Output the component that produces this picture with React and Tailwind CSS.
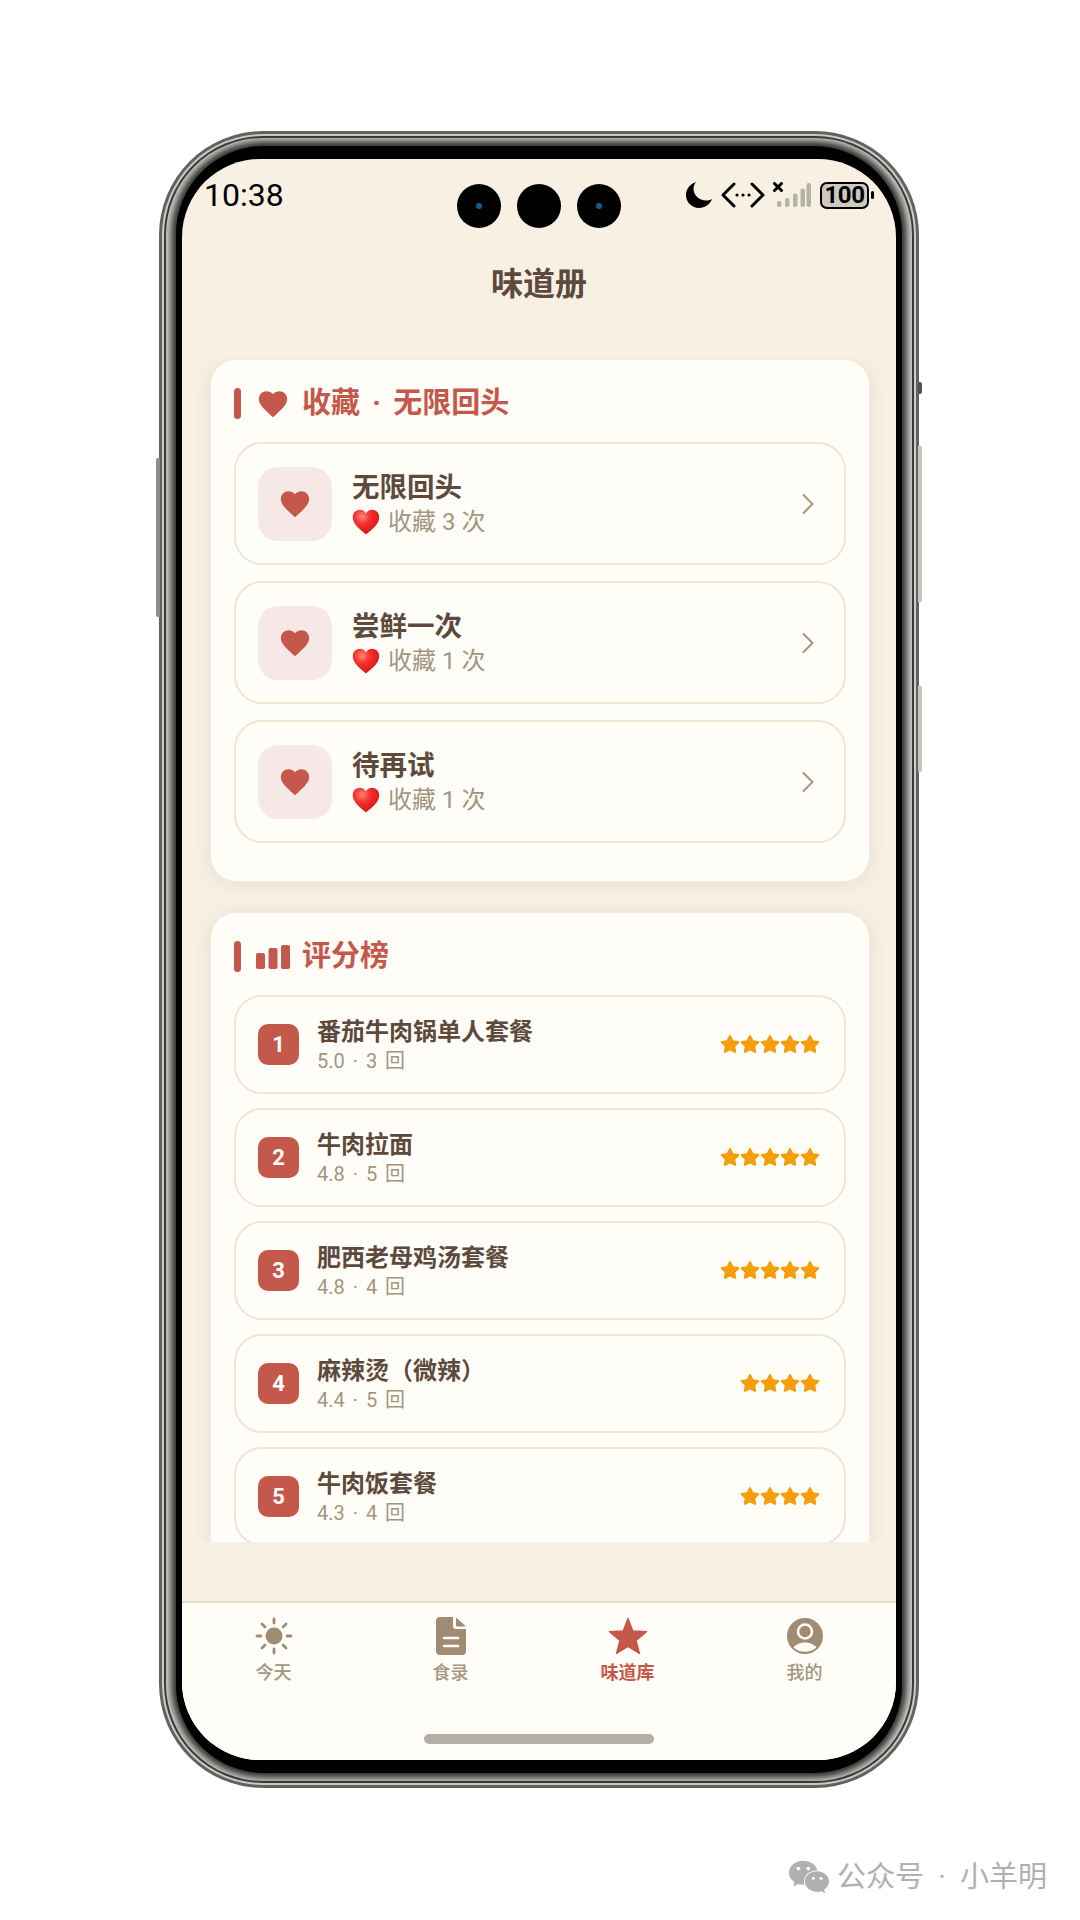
import React from "react";
import { FaStar, FaWeixin } from "react-icons/fa";

const font = { fontFamily: 'Roboto, "Noto Sans CJK SC", sans-serif' };

function Heart({ size = 34 }) {
  return (
    <svg width={size} height={size} viewBox="0 0 24 24" fill="#c4584a">
      <path d="M12 21.350l-1.450-1.320C5.400 15.360 2 12.280 2 8.500 2 5.420 4.420 3 7.500 3c1.740 0 3.410.81 4.500 2.090C13.090 3.810 14.760 3 16.500 3 19.580 3 22 5.420 22 8.500c0 3.780-3.400 6.860-8.550 11.540L12 21.350z" />
    </svg>
  );
}

function EmojiHeart({ id }) {
  return (
    <svg width="28" height="26" viewBox="0 0 28 26" className="shrink-0">
      <defs>
        <radialGradient id={id} cx="0.35" cy="0.28" r="0.85">
          <stop offset="0" stopColor="#ff8a7a" />
          <stop offset="0.35" stopColor="#f8312f" />
          <stop offset="1" stopColor="#c90f0f" />
        </radialGradient>
      </defs>
      <path d="M14 25.500C9 21 .8 15.600.8 8.200.8 3.700 4.200.8 7.900.8c2.600 0 4.800 1.300 6.100 3.600C15.300 2.100 17.500.8 20.100.8c3.700 0 7.100 2.900 7.100 7.400 0 7.400-8.200 12.800-13.200 17.300z" fill={`url(#${id})`} />
    </svg>
  );
}

function Chevron() {
  return (
    <svg width="14" height="22" viewBox="0 0 14 22" fill="none" stroke="#a39580" strokeWidth="2" strokeLinecap="round" strokeLinejoin="round">
      <path d="M2.500 2l9 9-9 9" />
    </svg>
  );
}

function SectionTitle({ icon, text }) {
  return (
    <div className="flex items-center h-[31px]">
      <div className="w-[7px] h-[31px] rounded-full bg-[#c4584a]" />
      <div className="w-[61px] flex justify-center pl-[2px]">{icon}</div>
      <span className="text-[29px] leading-none font-bold text-[#c4584a] [word-spacing:5px]">{text}</span>
    </div>
  );
}

function CollectRow({ name, count, id }) {
  return (
    <div className="h-[123px] flex items-center rounded-[28px] border-2 border-[#efe6d3] pl-[22px] pr-[29px]">
      <div className="w-[74px] h-[74px] rounded-[20px] bg-[#f6e8e6] flex items-center justify-center">
        <Heart />
      </div>
      <div className="flex-1 ml-[20px] flex flex-col">
        <span className="text-[27.500px] leading-[36px] font-bold text-[#5d4a3d]">{name}</span>
        <span className="flex items-center gap-[8px] text-[24px] leading-[32px] text-[#a39580]">
          <EmojiHeart id={id} />
          {`收藏 ${count} 次`}
        </span>
      </div>
      <Chevron />
    </div>
  );
}

function RankRow({ rank, name, score, times, stars }) {
  return (
    <div className="h-[99px] flex items-center rounded-[28px] border-2 border-[#efe6d3] pl-[22px] pr-[24px] shrink-0">
      <div className="w-[41px] h-[41px] rounded-[10px] bg-[#c4584a] flex items-center justify-center text-white text-[22px] font-bold">
        {rank}
      </div>
      <div className="flex-1 ml-[18px] flex flex-col">
        <span className="text-[24px] leading-[32px] font-bold text-[#5d4a3d]">{name}</span>
        <span className="text-[20px] leading-[26px] text-[#a39580] [word-spacing:3px]">{`${score} · ${times} 回`}</span>
      </div>
      <div className="flex mb-[2px]">
        {Array.from({ length: stars }).map((_, i) => (
          <FaStar key={i} className="w-[20px] h-[20px] text-[#f59e0b]" />
        ))}
      </div>
    </div>
  );
}

function SunIcon() {
  return (
    <svg width="38" height="38" viewBox="0 0 38 38" fill="#a08c72" stroke="#a08c72" strokeWidth="2.800" strokeLinecap="round">
      <circle cx="19" cy="19" r="8.500" stroke="none" />
      <path d="M19 2v4M19 32v4M2 19h4M32 19h4M7 7l3 3M28 28l3 3M7 31l3-3M28 10l3-3" fill="none" />
    </svg>
  );
}

function DocIcon() {
  return (
    <svg width="30" height="38" viewBox="0 0 30 38" fill="#a08c72">
      <path d="M4 0h13v9a3 3 0 0 0 3 3h10v22a4 4 0 0 1-4 4H4a4 4 0 0 1-4-4V4a4 4 0 0 1 4-4z" />
      <path d="M20 .5L30 9.500H21a1 1 0 0 1-1-1z" />
      <path d="M8 21h14M8 29h14" stroke="#fffdf7" strokeWidth="2.600" strokeLinecap="round" />
    </svg>
  );
}

function StarIcon() {
  return (
    <svg width="40" height="38" viewBox="0 0 40 38" fill="#c4584a" stroke="#c4584a" strokeWidth="1.400" strokeLinejoin="round">
      <path d="M20 1.500L24.800 14 38.500 14.800 28 23.500 31.500 36.500 20 29.300 8.500 36.500 12 23.500 1.500 14.800 15.200 14z" />
    </svg>
  );
}

function UserIcon() {
  return (
    <svg width="36" height="36" viewBox="0 0 36 36">
      <circle cx="18" cy="18" r="18" fill="#a08c72" />
      <circle cx="18" cy="13.500" r="7" fill="#a08c72" stroke="#fffdf7" strokeWidth="2.600" />
      <path d="M6.500 29.500C9 26 13.500 24.500 18 24.500s9 1.500 11.500 5c-3 2.800-7 4.300-11.500 4.300S9.500 32.300 6.500 29.500z" fill="#fffdf7" />
    </svg>
  );
}

function NavItem({ icon, label, active }) {
  return (
    <div className="flex flex-col items-center w-[177px]">
      <div className="h-[40px] flex items-center justify-center">{icon}</div>
      <span className={`mt-[5px] text-[18px] leading-[24px] ${active ? "font-bold text-[#c4584a]" : "font-medium text-[#a39580]"}`}>{label}</span>
    </div>
  );
}

function Camera({ lens }) {
  return (
    <div className="w-[44px] h-[44px] rounded-full bg-black flex items-center justify-center">
      {lens && <div className="w-[6px] h-[6px] rounded-full bg-[#0f5f8f]" />}
    </div>
  );
}

function StatusIcons() {
  return (
    <div className="flex items-center">
      <svg width="28" height="28" viewBox="0 0 28 28">
        <path d="M11 1C5 3 1 8 1 14c0 7.500 6 13 13 13 6 0 11-3.500 13-9-2 1.200-4 1.600-6 1.600C14 19.600 8.500 14 8.500 7.500 8.500 5.400 9.500 3 11 1z" fill="#000" />
      </svg>
      <svg className="ml-[8px]" width="44" height="26" viewBox="0 0 44 26" fill="none" stroke="#000" strokeWidth="3" strokeLinecap="round" strokeLinejoin="round">
        <path d="M13 2L2 13l11 11M31 2l11 11-11 11" />
        <path d="M16 13h.01M22 13h.01M28 13h.01" strokeWidth="3.200" />
      </svg>
      <svg className="ml-[8px]" width="39" height="26" viewBox="0 0 39 26">
        <path d="M1.500 1.500l7 7M8.500 1.500l-7 7" stroke="#000" strokeWidth="3" strokeLinecap="round" />
        <g fill="#b5b2a8">
          <rect x="4" y="19" width="4.500" height="6" rx="2" />
          <rect x="12" y="16" width="4.500" height="9" rx="2" />
          <rect x="20" y="11.500" width="4.500" height="13.500" rx="2" />
          <rect x="27.500" y="6.500" width="4.500" height="18.500" rx="2" />
          <rect x="33.500" y="1" width="4.500" height="24" rx="2" />
        </g>
      </svg>
      <div className="ml-[8px] w-[49px] h-[27px] rounded-[7px] border-2 border-black bg-[#cdc9bd] flex items-center justify-center text-[24px] leading-none font-bold text-black tracking-[-0.5px]">
        100
      </div>
      <div className="ml-[2px] w-[3px] h-[8px] rounded-full bg-black" />
    </div>
  );
}

export default function App() {
  return (
    <div className="w-[1080px] h-[1920px] bg-white overflow-hidden flex flex-col pt-[131px]" style={font}>
      <div className="relative ml-[159px] w-[760px] h-[1657px] shrink-0">
        {/* side keys */}
        <div className="absolute left-[-3px] top-[327px] w-[4px] h-[159px] bg-[#8d8c88] rounded-l-[2px]" />
        <div className="absolute right-[-3px] top-[251px] w-[4px] h-[12px] bg-[#55544f] rounded-r-[2px]" />
        <div className="absolute right-[-3px] top-[315px] w-[4px] h-[156px] bg-[#c7c5bf] rounded-r-[2px]" />
        <div className="absolute right-[-3px] top-[555px] w-[4px] h-[86px] bg-[#c7c5bf] rounded-r-[2px]" />

        <div className="w-full h-full rounded-[104px] bg-[#626260] p-[3px]">
          <div className="w-full h-full rounded-[101px] bg-[#d0d0cb] p-[2px]">
            <div className="w-full h-full rounded-[99px] bg-[#3c3c3a] p-[2px]">
              <div className="w-full h-full rounded-[97px] bg-[#d2d2cd] px-[10px] py-[8px]">
                <div className="w-full h-full rounded-[88px] bg-black px-[6px] py-[13px] shadow-[0_0_7px_5px_#2e2e2c]">
                  <div className="w-[714px] h-[1601px] rounded-[78px] bg-[#f7f0e3] overflow-hidden flex flex-col">
                    {/* status bar */}
                    <div className="h-[90px] shrink-0 flex justify-between items-start px-[22px] pt-[18px]">
                      <span className="w-[192px] text-[32px] leading-[36px] text-black">10:38</span>
                      <div className="flex gap-[16px] mt-[7px]">
                        <Camera lens />
                        <Camera />
                        <Camera lens />
                      </div>
                      <div className="w-[192px] flex justify-end pt-[4px] shrink-0">
                        <StatusIcons />
                      </div>
                    </div>
                    {/* title */}
                    <div className="h-[70px] shrink-0 flex items-center justify-center text-[32px] font-bold text-[#5d4a3d]">
                      味道册
                    </div>
                    {/* scroll */}
                    <div className="h-[1183px] shrink-0 mt-[40px] overflow-hidden pl-[28px] pr-[26px]">
                      <div className="h-[523px] rounded-[26px] bg-[#fffdf7] border border-[#f2eadb] shadow-[0_2px_16px_rgba(150,120,80,0.14)] px-[23px] pt-[28px]">
                        <SectionTitle icon={<Heart />} text="收藏 · 无限回头" />
                        <div className="mt-[23px] flex flex-col gap-[16px]">
                          <CollectRow name="无限回头" count={3} id="eh1" />
                          <CollectRow name="尝鲜一次" count={1} id="eh2" />
                          <CollectRow name="待再试" count={1} id="eh3" />
                        </div>
                      </div>
                      <div className="mt-[30px] h-[700px] rounded-[26px] bg-[#fffdf7] border border-[#f2eadb] shadow-[0_2px_16px_rgba(150,120,80,0.14)] px-[23px] pt-[28px]">
                        <SectionTitle
                          icon={
                            <svg width="34" height="24" viewBox="0 0 34 24" fill="#c4584a">
                              <rect x="0" y="8" width="9" height="16" rx="2" />
                              <rect x="12.500" y="3" width="9" height="21" rx="2" />
                              <rect x="25" y="0" width="9" height="24" rx="2" />
                            </svg>
                          }
                          text="评分榜"
                        />
                        <div className="mt-[23px] flex flex-col gap-[14px]">
                          <RankRow rank={1} name="番茄牛肉锅单人套餐" score="5.0" times={3} stars={5} />
                          <RankRow rank={2} name="牛肉拉面" score="4.8" times={5} stars={5} />
                          <RankRow rank={3} name="肥西老母鸡汤套餐" score="4.8" times={4} stars={5} />
                          <RankRow rank={4} name="麻辣烫（微辣）" score="4.4" times={5} stars={4} />
                          <RankRow rank={5} name="牛肉饭套餐" score="4.3" times={4} stars={4} />
                        </div>
                      </div>
                    </div>
                    <div className="h-[59px] shrink-0" />
                    {/* nav */}
                    <div className="flex-1 bg-[#fffdf7] border-t-2 border-[#e6dcc6] flex flex-col items-center">
                      <div className="flex justify-center w-full pt-[13px]">
                        <NavItem icon={<SunIcon />} label="今天" />
                        <NavItem icon={<DocIcon />} label="食录" />
                        <NavItem icon={<StarIcon />} label="味道库" active />
                        <NavItem icon={<UserIcon />} label="我的" />
                      </div>
                      <div className="mt-[49px] w-[230px] h-[10px] rounded-full bg-[#b3afa6]" />
                    </div>
                  </div>
                </div>
              </div>
            </div>
          </div>
        </div>
      </div>
      {/* watermark */}
      <div className="mt-[69px] self-end pr-[33px] flex items-center text-[#b0b0b0]">
        <FaWeixin className="w-[42px] h-[38px]" />
        <span className="ml-[7px] text-[29px] leading-[40px] [word-spacing:7px]">公众号 · 小羊明</span>
      </div>
    </div>
  );
}
